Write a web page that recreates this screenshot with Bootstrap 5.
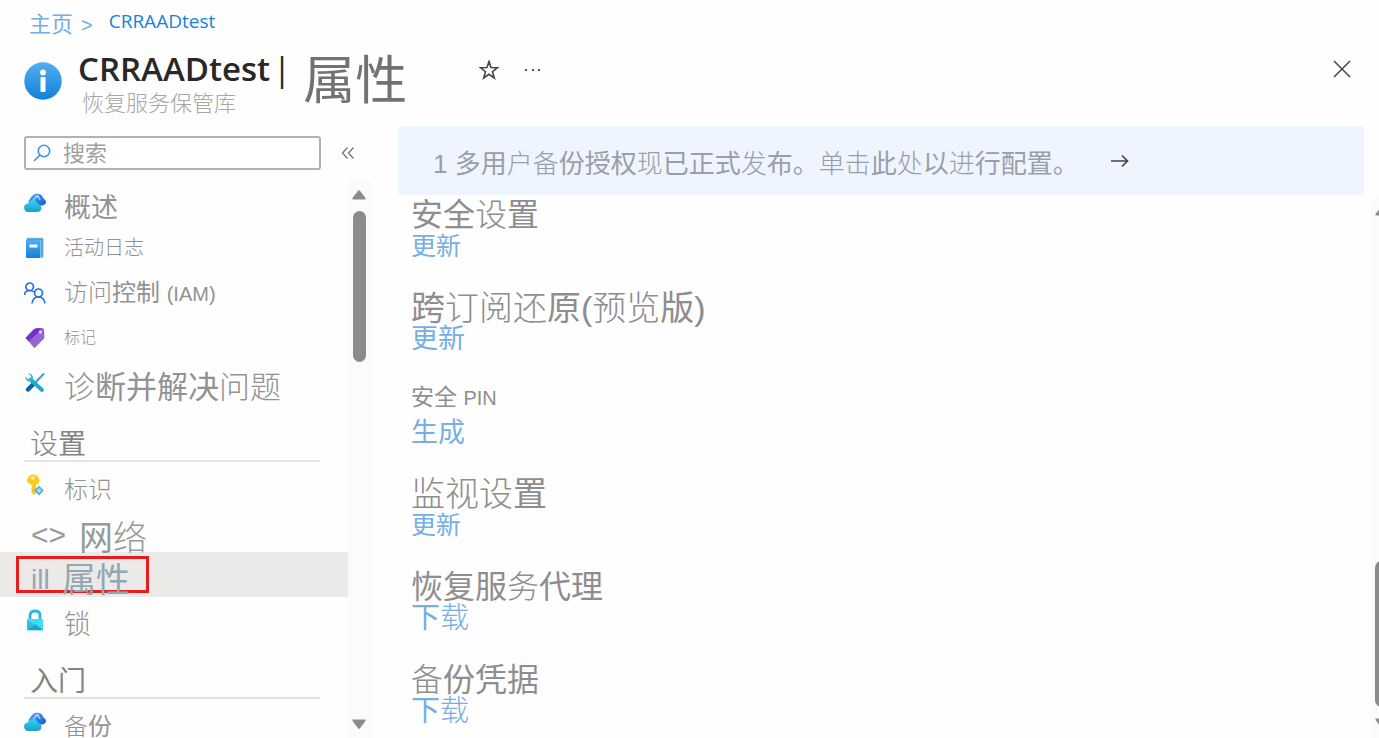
<!DOCTYPE html>
<html lang="zh-CN">
<head>
<meta charset="utf-8">
<meta name="viewport" content="width=device-width, initial-scale=1">
<title>CRRAADtest | 属性</title>
<link href="https://cdn.jsdelivr.net/npm/bootstrap@5.3.0/dist/css/bootstrap.min.css" rel="stylesheet">
<style>
body{font-family:"Liberation Sans","Noto Sans CJK SC",sans-serif;background:#fefefe;color:#929292}
.latin{font-family:"Open Sans","Noto Sans",sans-serif}
a{text-decoration:none}
svg{display:block;flex:none}
.f16{font-size:16px}.f20{font-size:20px}.f22{font-size:22px}.f24{font-size:24px}.f27{font-size:27px}
.f31{font-size:31px}.f34{font-size:34px}
.thin{font-weight:300}
.crumbs{height:46px;padding-left:29px;line-height:26px}
.crumbs a,.crumbs span{color:#72aee2}
.crumbs .latin{color:#1583d8;font-size:19px}
.page-head{height:80px;padding:0 28px 0 24px}
.page-head h1{font-size:33px;line-height:46px;font-weight:600;color:#292827}
.page-head h1 span{font-weight:400;margin-left:3px}
.page-head .section{font-size:52px;line-height:70px;font-weight:400;color:#737271;margin-left:12px}
.page-head .kind{line-height:24px;color:#a6a6a6}
.actions{height:48px}
.plain{background:none;border:0;padding:0;color:#333}
.side{flex:0 0 370px}
.search-row{height:54px}
.search{width:297px;height:34px;border:2px solid #b1b1b1;border-radius:3px;background:#fff;padding-left:7px}
.search svg{margin-right:12px}
.search input{border:0;outline:0;background:none;min-width:0;font-size:22px;line-height:28px;padding:2px 0 0;color:#929292}
.search input::placeholder{color:#a0a0a0;opacity:1}
.menu-item{height:45px;padding-left:24px;color:#929292;position:relative;white-space:nowrap}
.menu-item svg{margin-right:18px}
.menu-item span{line-height:24px}
.menu-item .low{padding-top:10px}
.menu-item .mid{padding-top:4px}
.menu-item.glyph{padding-left:31px;color:#959b99}
.menu-item.current{background:#ebeae9;color:#93a7b1}
.sign{font-size:30px;width:48px}
.bars{font-size:28px;width:31px}
.mark-box{position:absolute;left:16px;top:4px;width:133px;height:37px;border:3px solid #e81c1c}
.glyph>span{z-index:1}
.menu-title{height:57px;margin:0 28px 0 24px;padding:20px 0 0 6px;border-bottom:2px solid #e3e3e3;font-size:28px;line-height:40px;font-weight:400;color:#848484}
.track{width:22px;background:#fbfbfb;padding:10px 0 9px}
.thumb{width:13px;height:28%;border-radius:7px;background:#8b8b8b}
.track .thumb{margin-top:11px}
.edge{width:8px;background:#fbfbfb;padding:11px 0 10px}
.edge>*{margin-left:4px;flex:none}
.edge .thumb{margin-bottom:11px}
.banner{height:69px;margin-right:15px;padding:6px 0 0 35px;background:#eff5fe;border-radius:3px;color:#9a9dab;font-size:26px;line-height:36px;white-space:nowrap}
.banner button{margin:0 0 6px 32px}
.settings{padding-top:3px}
.setting{height:93px;padding-left:13px;white-space:nowrap}
.setting h2{margin:0;font-size:32px;line-height:34px;font-weight:400;color:#8f8d8d}
.setting a{display:block;width:max-content;line-height:28px;color:#77aee4}
.setting .s23{font-size:23px;line-height:26px;margin-bottom:8px}
.setting .s34{font-size:34px}
.setting .s29{font-size:29px}
.setting .s25{font-size:25px}
</style>
</head>
<body class="vh-100 d-flex flex-column overflow-hidden">
<svg width="0" height="0" class="position-absolute" aria-hidden="true">
<defs>
<linearGradient id="gi" x2="0" y2="1"><stop stop-color="#52aef0"/><stop offset="1" stop-color="#1280d8"/></linearGradient>
<linearGradient id="gc" x2="0" y2="1"><stop stop-color="#32d4f5"/><stop offset="1" stop-color="#1c9fc4"/></linearGradient>
<linearGradient id="gb" x2="1" y2="1"><stop stop-color="#5ea0ef"/><stop offset="1" stop-color="#0b62d6"/></linearGradient>
<linearGradient id="gp" x1="0" y1="0" x2="0" y2="1"><stop stop-color="#7329cf"/><stop offset=".2" stop-color="#9a63da"/><stop offset="1" stop-color="#9667c9"/></linearGradient>
<symbol id="cloud" viewBox="0 0 22 22"><path d="M9 14a4 4 0 0 1-3-7C8 3 11 1 14 2c3 0 5 2 5 4 2 1 3 3 3 4 0 2-2 3.500-4 3.500Z" fill="url(#gb)"/><path d="m9 8 5-4 2 4M14 4l-3 0" fill="none" stroke="#a6ccff" stroke-width="1.500"/><path d="M4 20c-2 0-4-2-4-4.500s2-4 4-4c1-2.500 3-3.500 5-3.500 3 0 4 2 5 4 2 0 3.500 2 3.500 4s-1.500 4-4.500 4Z" fill="url(#gc)"/></symbol>
</defs>
</svg>

<nav class="crumbs d-flex flex-shrink-0 pt-2" aria-label="导航路径">
  <a href="#" class="f22 pt-1">主页</a><span class="f20 ms-2 me-3 pt-1">&gt;</span><a href="#" class="latin">CRRAADtest</a>
</nav>

<header class="page-head d-flex flex-shrink-0">
  <svg class="mt-3" width="38" height="38" viewBox="0 0 38 38"><circle cx="19" cy="19" r="18.700" fill="url(#gi)"/><circle cx="19" cy="10.500" r="2.900" fill="#fff"/><rect x="16.500" y="15" width="5" height="15" rx="1" fill="#fff"/></svg>
  <div class="ms-3">
    <h1 class="latin m-0 text-nowrap">CRRAADtest<span>|</span></h1>
    <div class="kind f22 thin ms-1">恢复服务保管库</div>
  </div>
  <div class="section text-nowrap">属性</div>
  <div class="actions d-flex align-items-center">
    <button class="plain ms-5" aria-label="收藏"><svg class="ms-4" width="20" height="20" viewBox="0 0 20 20"><path d="m10 1.500 2 6 6.500.2-5 4 1.800 6.300-5.300-3.700L4.700 18l1.800-6.300-5-4L8 7.500Z" fill="none" stroke="#444" stroke-width="1.600"/></svg></button>
    <button class="plain ms-4" aria-label="更多"><svg width="20" height="20" viewBox="0 0 20 20"><path d="M2 9h2v2H2zM9 9h2v2H9zM15 9h2v2h-2z" fill="#555"/></svg></button>
  </div>
  <button class="plain ms-auto align-self-start" aria-label="关闭"><svg width="18" height="46" viewBox="0 0 18 46"><path d="m1 15 16 16M17 15 1 31" stroke="#444" stroke-width="1.500"/></svg></button>
</header>

<div class="d-flex flex-grow-1 overflow-hidden">
  <aside class="side d-flex flex-column">
    <div class="search-row d-flex align-items-center flex-shrink-0 ps-4">
      <label class="search d-flex align-items-center"><svg width="18" height="18" viewBox="0 0 18 18"><circle cx="11" cy="7" r="5.700" fill="none" stroke="#3794e4" stroke-width="1.600"/><path d="M7 11 1 17" stroke="#3794e4" stroke-width="1.600"/></svg><input type="text" placeholder="搜索" aria-label="搜索" class="w-100"></label>
      <button class="plain ms-3 ps-1" aria-label="折叠菜单"><svg width="14" height="14" viewBox="0 0 14 14"><path d="M6.500 1.500 1.500 7l5 5.500M12.500 1.500 7.500 7l5 5.500" fill="none" stroke="#777" stroke-width="1.300"/></svg></button>
    </div>
    <div class="d-flex flex-grow-1 overflow-hidden">
      <nav class="flex-grow-1 overflow-hidden">
        <a href="#" class="menu-item d-flex align-items-center"><svg width="22" height="22"><use href="#cloud"/></svg><span class="f27 low">概述</span></a>
        <a href="#" class="menu-item d-flex align-items-center"><svg width="22" height="22" viewBox="0 0 22 22"><rect x="2.500" y=".7" width="17" height="20.300" rx="1.500" fill="#79c1f1"/><path d="M3.500 3H16v18H3.500a1.500 1.500 0 0 1-1.500-1.500v-17Z" fill="url(#gi)"/><path d="M3 2.200h15v17" fill="none" stroke="#3b8fc9" stroke-width="1"/><rect x="5.500" y="7.500" width="8" height="3" fill="#fff"/></svg><span class="f20 thin">活动日志</span></a>
        <a href="#" class="menu-item d-flex align-items-center"><svg width="22" height="22" viewBox="0 0 22 22" fill="none" stroke="#2571df" stroke-width="1.700"><circle cx="5.700" cy="4.800" r="3.800"/><path d="M.7 13c0-3 2-4.500 5-4.500 1.800 0 3 .5 4 1.500"/><circle cx="14.500" cy="11" r="4"/><path d="M8 21.500c.5-4 3-6.500 6.500-6.500s6 2.500 6.500 6.500"/></svg><span class="mid"><span class="f24"><span class="thin">访问</span>控制 </span><span class="f20">(IAM)</span></span></a>
        <a href="#" class="menu-item d-flex align-items-center"><svg width="22" height="22" viewBox="0 0 22 22"><path d="M1.500 11 10 2.200 18 1c1.300 0 2 .7 2 2l.5 7.500L10.500 21Z" fill="#9b6bcc"/><path d="M1.500 11 10 2c3-1.500 6-1 8 0L5 14.500Z" fill="#7630ce"/><path d="m5 14 12-10 3 1v6.500L10.500 21Z" fill="url(#gp)"/><circle cx="16.500" cy="5" r="1.800" fill="#e5cffb"/></svg><span class="f16 thin">标记</span></a>
        <a href="#" class="menu-item d-flex align-items-center"><svg width="22" height="22" viewBox="0 0 22 22"><path d="M20 1.500 8.500 13.500" stroke="#4a9cb8" stroke-width="2"/><path d="m9 12.500-5 5" stroke="#0b67a8" stroke-width="4.500" stroke-linecap="round"/><path d="m6.500 7.500 11.500 10.500" stroke="#1fa9cf" stroke-width="3.800" stroke-linecap="round"/><path d="M4 1.500 7 4v3L4 7 1.500 4.500C1 7 3 10 6 9.500l3-2.500C9.500 3.500 7 1 4 1.500Z" fill="#25bfe5"/></svg><span class="f31 low"><span class="thin">诊</span>断并解决<span class="thin">问题</span></span></a>

        <h2 class="menu-title"><span class="thin">设</span>置</h2>
        <a href="#" class="menu-item d-flex align-items-center"><svg width="22" height="22" viewBox="0 0 22 22"><path d="M9 .5c3.500 0 6.500 3 6.500 6 0 2-1.500 3.500-3.500 4.500v8l-2 2-3-2.500 1-2-1-2 1-1.500-.5-2C5 10 3 8 3 6.500 3 4 6 .5 9 .5Z" fill="#fbcb22"/><circle cx="9" cy="4" r="1.700" fill="#fff4b8"/><path d="m15 11.500 5 5-5 5-5-5Z" fill="#5eb0d3"/><path d="m15 14 2.500 2.500L15 19l-2.500-2.500Z" fill="#a8dff2"/></svg><span class="f24 thin low">标识</span></a>
        <a href="#" class="menu-item glyph d-flex align-items-center"><span class="sign low">&lt;&gt;</span><span class="f34 low pt-3">网<span class="thin">络</span></span></a>
        <a href="#" class="menu-item glyph current d-flex align-items-center" aria-current="page"><i class="mark-box"></i><span class="bars low">ill</span><span class="f34 low">属性</span></a>
        <a href="#" class="menu-item d-flex align-items-center"><svg width="22" height="22" viewBox="0 0 22 22"><path d="M6 11V6.500C6 3.500 8 2 11 2s5 1.500 5 4.500V11" fill="none" stroke="#26b9dd" stroke-width="2.800"/><rect x="3" y="10" width="16" height="11.500" rx="1" fill="#3edcf6"/><path d="m3 21 8-6 8 6Z" fill="#239fc7"/><path d="M3 10.500 11 16l-8 5Z" fill="#31bfe0"/></svg><span class="f27 thin low">锁</span></a>
        <h2 class="menu-title">入门</h2>
        <a href="#" class="menu-item d-flex align-items-center"><svg width="22" height="22"><use href="#cloud"/></svg><span class="f24 low"><span class="thin">备</span>份</span></a>
      </nav>
      <div class="track d-flex flex-column align-items-center">
        <svg width="14" height="10" viewBox="0 0 14 10"><path d="M6 .8q1-1 2 0L13.500 8v1.500H.5V8Z" fill="#8b8b8b"/></svg>
        <div class="thumb mb-auto"></div>
        <svg width="14" height="10" viewBox="0 0 14 10"><path d="M6 9.200q1 1 2 0L13.500 2V.5H.5V2Z" fill="#8b8b8b"/></svg>
      </div>
    </div>
  </aside>

  <main class="flex-grow-1 d-flex flex-column overflow-hidden ms-4 ps-1">
    <div class="banner d-flex flex-shrink-0 align-items-center"><span>1 多用<span class="thin">户备</span>份授权<span class="thin">现</span>已正式<span class="thin">发</span>布。<span class="thin">单击</span>此<span class="thin">处</span>以<span class="thin">进</span>行配置。</span><button class="plain" aria-label="配置"><svg width="18" height="14" viewBox="0 0 18 14"><path d="M0 7h16M11 1.500 16.500 7 11 12.500" fill="none" stroke="#444" stroke-width="1.700"/></svg></button></div>
    <div class="d-flex flex-grow-1 overflow-hidden">
      <div class="settings flex-grow-1">
        <section class="setting"><h2>安全<span class="thin">设</span>置</h2><a href="#" class="s25">更新</a></section>
        <section class="setting"><h2 class="s34">跨<span class="thin">订阅还</span>原(<span class="thin">预览</span>版)</h2><a href="#" class="f27">更新</a></section>
        <section class="setting"><h2 class="s23">安全 <span class="f20">PIN</span></h2><a href="#" class="f27">生成</a></section>
        <section class="setting"><h2 class="s34"><span class="thin">监视设</span>置</h2><a href="#" class="s25">更新</a></section>
        <section class="setting"><h2>恢复服<span class="thin">务</span>代理</h2><a href="#" class="s29">下<span class="thin">载</span></a></section>
        <section class="setting"><h2><span class="thin">备</span>份凭据</h2><a href="#" class="s29">下<span class="thin">载</span></a></section>
      </div>
      <div class="edge d-flex flex-column overflow-hidden">
        <svg width="14" height="10" viewBox="0 0 14 10"><path d="M6 .8q1-1 2 0L13.500 8v1.500H.5V8Z" fill="#8b8b8b"/></svg>
        <div class="thumb mt-auto"></div>
        <svg width="14" height="10" viewBox="0 0 14 10"><path d="M6 9.200q1 1 2 0L13.500 2V.5H.5V2Z" fill="#8b8b8b"/></svg>
      </div>
    </div>
  </main>
</div>
<script src="https://cdn.jsdelivr.net/npm/bootstrap@5.3.0/dist/js/bootstrap.bundle.min.js"></script>
</body>
</html>
